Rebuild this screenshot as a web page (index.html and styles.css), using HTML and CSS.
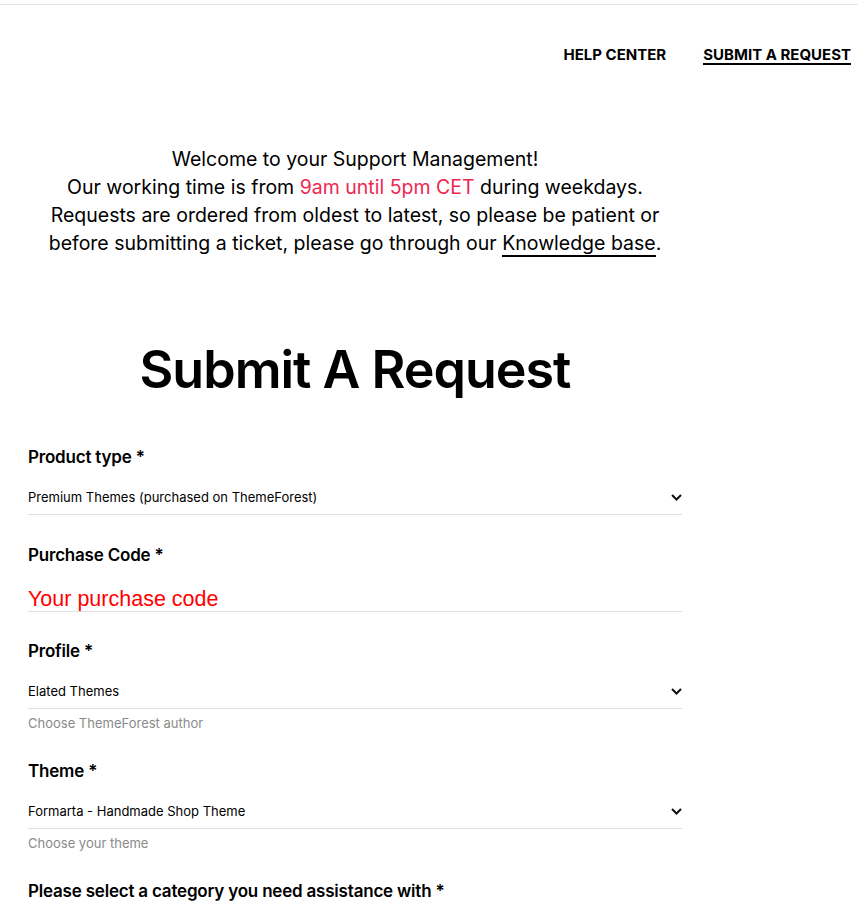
FILE: index.html
```html
<!DOCTYPE html>
<html>
<head>
  <title>Submit A Request</title>
  <link rel="stylesheet" href="styles.css">
</head>
<body>

  <div class="topbar"></div>

  <div class="nav">
    <a href="#">Help Center</a>
    <a href="#" class="active">Submit A Request</a>
  </div>

  <div class="content">
    <p class="intro">
      Welcome to your Support Management!<br>
      Our working time is from <span class="hours">9am until 5pm CET</span> during weekdays.<br>
      Requests are ordered from oldest to latest, so please be patient or<br>
      before submitting a ticket, please go through our <a href="#">Knowledge base</a>.
    </p>

    <h1>Submit A Request</h1>

    <form class="request-form">
      <div class="field">
        <label>Product type <span>*</span></label>
        <div class="select">
          <span>Premium Themes (purchased on ThemeForest)</span>
          <svg width="11" height="7" viewBox="0 0 11 7"><path d="M1 1l4.5 4.5L10 1" fill="none" stroke="#111" stroke-width="2"/></svg>
        </div>
      </div>

      <div class="field field-input">
        <label>Purchase Code <span>*</span></label>
        <input type="text" placeholder="Your purchase code">
      </div>

      <div class="field">
        <label>Profile <span>*</span></label>
        <div class="select">
          <span>Elated Themes</span>
          <svg width="11" height="7" viewBox="0 0 11 7"><path d="M1 1l4.5 4.5L10 1" fill="none" stroke="#111" stroke-width="2"/></svg>
        </div>
        <div class="hint">Choose ThemeForest author</div>
      </div>

      <div class="field">
        <label>Theme <span>*</span></label>
        <div class="select">
          <span>Formarta - Handmade Shop Theme</span>
          <svg width="11" height="7" viewBox="0 0 11 7"><path d="M1 1l4.5 4.5L10 1" fill="none" stroke="#111" stroke-width="2"/></svg>
        </div>
        <div class="hint">Choose your theme</div>
      </div>

      <div class="field">
        <label>Please select a category you need assistance with <span>*</span></label>
      </div>
    </form>
  </div>

</body>
</html>
```

FILE: styles.css
```css
body {
  margin: 0;
  font-family: 'Inter', 'Roboto', sans-serif;
  color: #000;
  background: #fff;
}

.topbar {
  margin-top: 4px;
  border-top: 1px solid #e4e4e4;
}

.nav {
  display: flex;
  justify-content: flex-end;
  align-items: flex-start;
  gap: 37px;
  padding: 42px 7px 0 0;
}

.nav a {
  font-size: 15px;
  font-weight: 700;
  text-transform: uppercase;
  color: #000;
  text-decoration: none;
  line-height: 16px;
  border-bottom: 2px solid transparent;
}

.nav a.active {
  border-bottom-color: #000;
}

.content {
  width: 654px;
  margin-left: 28px;
}

.intro {
  margin: 80px 0 0;
  text-align: center;
  font-size: 19.5px;
  line-height: 28px;
}

.intro .hours {
  color: #ee2852;
}

.intro a {
  color: #000;
  text-decoration: none;
  border-bottom: 2px solid #000;
}

h1 {
  margin: 83px 0 0;
  text-align: center;
  font-size: 52px;
  font-weight: 600;
  line-height: 60px;
  letter-spacing: -1px;
}

.request-form {
  margin-top: 45px;
}

.field {
  margin-bottom: 28px;
}

.field-input {
  margin-bottom: 27px;
}

.field label {
  display: block;
  font-size: 17px;
  font-weight: 600;
  line-height: 24px;
  letter-spacing: -0.2px;
}

.select {
  display: flex;
  justify-content: space-between;
  align-items: center;
  margin-top: 20px;
  padding-bottom: 9px;
  border-bottom: 1px solid #e0e0e0;
  font-size: 13px;
  line-height: 16px;
}

.field input {
  display: block;
  width: 100%;
  box-sizing: border-box;
  margin-top: 20px;
  padding: 0;
  border: none;
  border-bottom: 1px solid #e0e0e0;
  font-family: 'Liberation Sans', sans-serif;
  font-size: 21.5px;
  line-height: 24px;
  outline: none;
}

.field input::placeholder {
  color: #f00;
}

.hint {
  margin-top: 6px;
  font-size: 13px;
  line-height: 16px;
  color: #8a8a8a;
}
```
